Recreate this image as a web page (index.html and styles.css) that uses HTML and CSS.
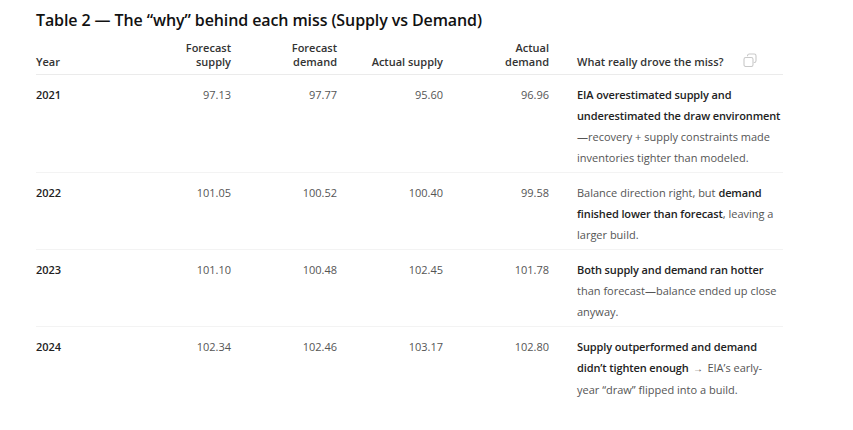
FILE: index.html
```html
<!DOCTYPE html>
<html lang="en">
<head>
<meta charset="utf-8">
<title>Table 2</title>
<link rel="stylesheet" href="styles.css">
</head>
<body>
<div class="page">
  <h3 class="title">Table 2 — The “why” behind each miss (Supply vs Demand)</h3>
  <table class="miss-table">
    <colgroup>
      <col class="c-year">
      <col class="c-num">
      <col class="c-num">
      <col class="c-num">
      <col class="c-num">
      <col class="c-why">
    </colgroup>
    <thead>
      <tr>
        <th class="left">Year</th>
        <th>Forecast<br>supply</th>
        <th>Forecast<br>demand</th>
        <th>Actual supply</th>
        <th>Actual<br>demand</th>
        <th class="left why-head">What really drove the miss?
          <span class="copy" aria-label="Copy table">
            <svg width="14" height="14" viewBox="0 0 14 14" fill="none" stroke="#c9c9c9" stroke-width="1.1">
              <path d="M4.5 3.2 V2.8 A1.8 1.8 0 0 1 6.3 1 H11.2 A1.8 1.8 0 0 1 13 2.8 V7.7 A1.8 1.8 0 0 1 11.2 9.5 H10.8"/>
              <rect x="1" y="4.5" width="9" height="9" rx="1.8"/>
            </svg>
          </span>
        </th>
      </tr>
    </thead>
    <tbody>
      <tr>
        <td class="year">2021</td>
        <td>97.13</td>
        <td>97.77</td>
        <td>95.60</td>
        <td>96.96</td>
        <td class="why"><strong>EIA overestimated supply and underestimated the draw environment</strong> —recovery + supply constraints made inventories tighter than modeled.</td>
      </tr>
      <tr>
        <td class="year">2022</td>
        <td>101.05</td>
        <td>100.52</td>
        <td>100.40</td>
        <td>99.58</td>
        <td class="why">Balance direction right, but <strong>demand finished lower than forecast</strong>, leaving a larger build.</td>
      </tr>
      <tr>
        <td class="year">2023</td>
        <td>101.10</td>
        <td>100.48</td>
        <td>102.45</td>
        <td>101.78</td>
        <td class="why"><strong>Both supply and demand ran hotter</strong> than forecast—balance ended up close anyway.</td>
      </tr>
      <tr>
        <td class="year">2024</td>
        <td>102.34</td>
        <td>102.46</td>
        <td>103.17</td>
        <td>102.80</td>
        <td class="why"><strong>Supply outperformed and demand didn’t tighten enough</strong> <span class="arrow">→</span> EIA’s early-year “draw” flipped into a build.</td>
      </tr>
    </tbody>
  </table>
</div>
</body>
</html>
```

FILE: styles.css
```css
html, body {
  margin: 0;
  padding: 0;
  background: #ffffff;
}

body {
  font-family: "Open Sans", "Noto Sans", "Liberation Sans", sans-serif;
  color: #333;
}

.page {
  padding: 9px 0 0 36px;
  width: 747px;
}

.title {
  margin: 0 0 10px 0;
  font-size: 16px;
  line-height: 22px;
  font-weight: 600;
  color: #111;
  letter-spacing: -0.1px;
}

.miss-table {
  width: 747px;
  border-collapse: collapse;
  table-layout: fixed;
}

.c-year { width: 103px; }
.c-num { width: 106px; }
.c-why { width: 220px; }

.miss-table th {
  font-size: 11px;
  font-weight: 600;
  color: #333;
  line-height: 14px;
  text-align: right;
  vertical-align: bottom;
  padding: 0 14px 5px 14px;
  border-bottom: 1px solid #ebebeb;
}

.miss-table th.left {
  text-align: left;
}

.miss-table th:first-child,
.miss-table td:first-child {
  padding-left: 0;
}

.miss-table th:last-child,
.miss-table td:last-child {
  padding-right: 0;
}

.why-head {
  position: relative;
}

.copy {
  position: absolute;
  right: 26px;
  bottom: 7px;
  width: 14px;
  height: 14px;
  display: block;
}

.copy svg {
  display: block;
}

.miss-table td {
  font-size: 11px;
  line-height: 21px;
  color: #555;
  text-align: right;
  vertical-align: top;
  padding: 9px 14px 4px 14px;
  border-bottom: 1px solid #f3f3f3;
}

.miss-table tbody tr:last-child td {
  border-bottom: none;
}

.miss-table td.year {
  text-align: left;
  font-weight: 600;
  color: #222;
}

.miss-table td.why {
  text-align: left;
  color: #555;
}

.why strong {
  font-weight: 600;
  color: #222;
  letter-spacing: -0.12px;
}

.arrow {
  margin: 0 1.5px;
  font-size: 10px;
}
```
